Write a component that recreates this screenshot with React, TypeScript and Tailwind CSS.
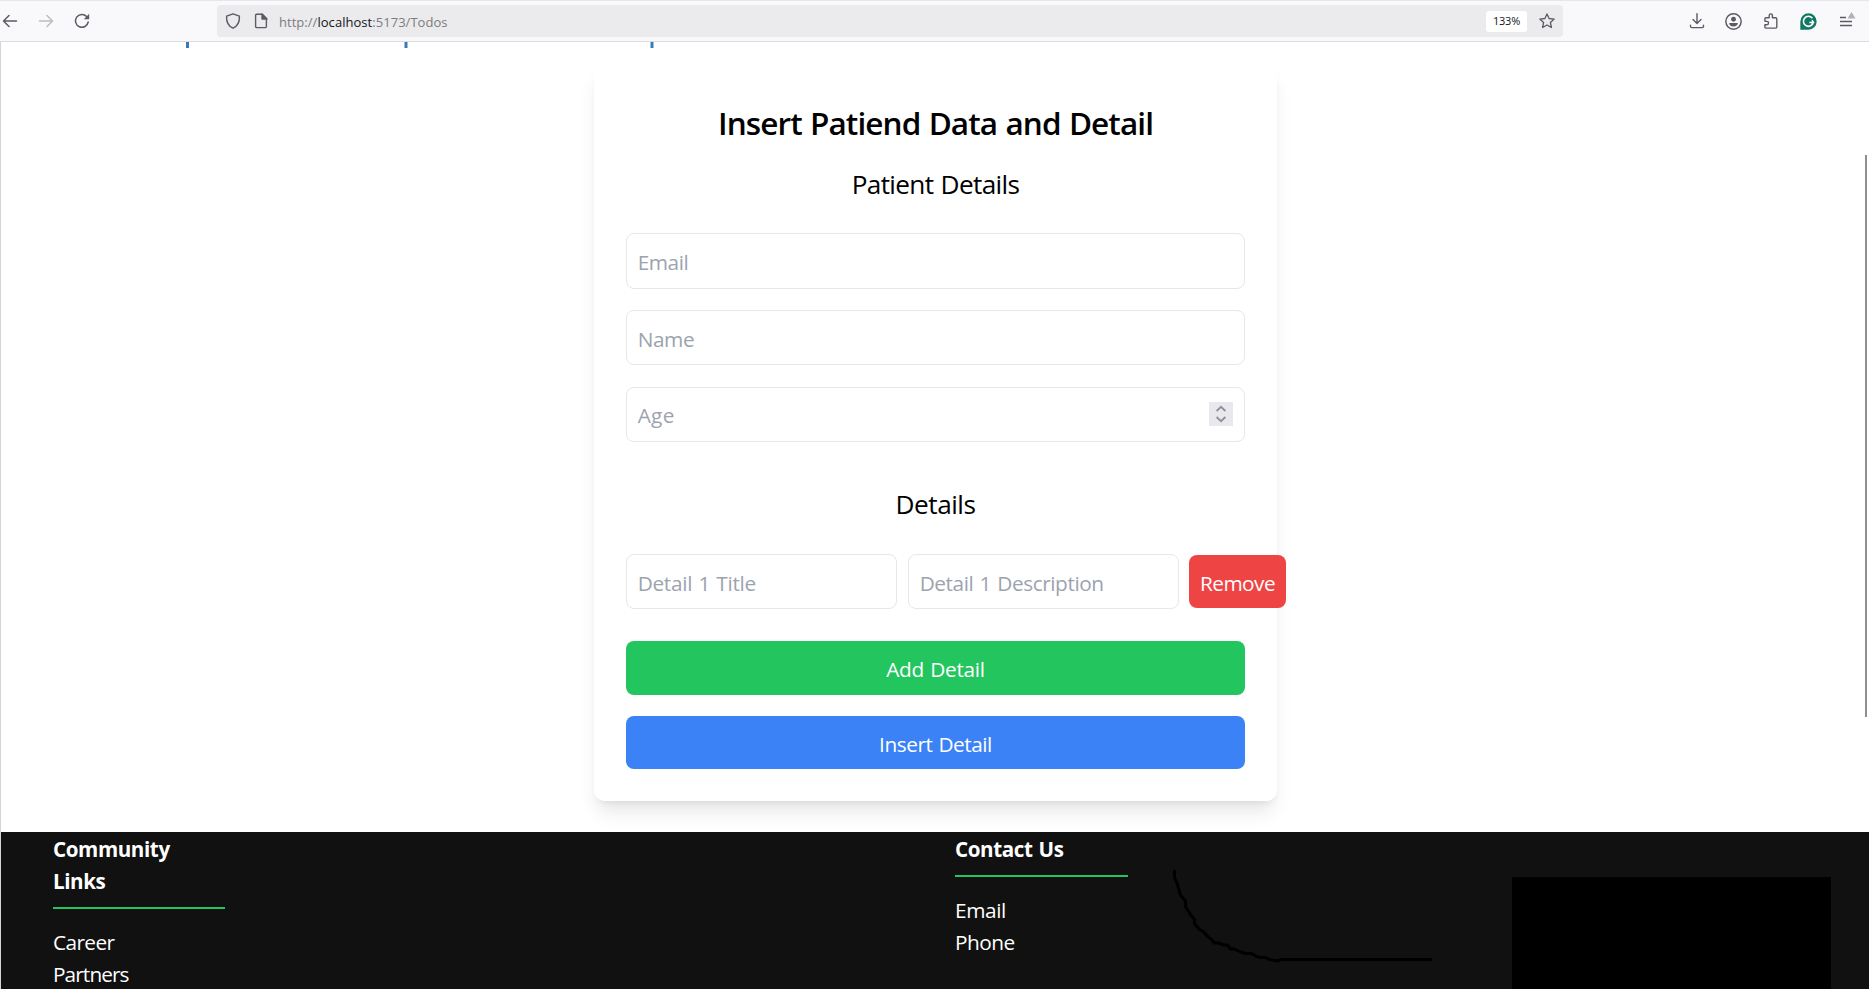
import React from "react";

const body = "font-['Open_Sans','Noto_Sans',sans-serif]";

function Placeholder({ text, className = "", label = "tracking-[-0.3px]", number = false }: { text: string; className?: string; label?: string; number?: boolean }) {
  return (
    <div className={`flex items-center justify-between rounded-[8px] border border-[#e5e7eb] bg-white px-[10.67px] ${className}`}>
      <span className={`pt-[2px] text-[20.8px] leading-8 whitespace-nowrap text-[#9ca3af] ${label}`}>{text}</span>
      {number && (
        <span className="mb-[2px] flex h-6 w-6 items-center justify-center bg-[#e9e9ed]">
          <svg width="24" height="24" viewBox="0 0 24 24" fill="none" stroke="#8f8f9d" strokeWidth="1.9">
            <path d="M7.6 9 12 4.9 16.4 9M7.6 15 12 19.1 16.4 15" />
          </svg>
        </span>
      )}
    </div>
  );
}

function Toolbar() {
  return (
    <header className="flex h-[42px] items-center border-t border-b border-t-[#e6e6ea] border-b-[#dcdcde] bg-[#f9f9fb] text-[#5b5b66]">
      <div className="flex w-[217px] items-center">
        <svg className="ml-[2px]" width="16" height="16" viewBox="0 0 16 16" fill="none" stroke="#5b5b66" strokeWidth="1.5" strokeLinecap="round" strokeLinejoin="round">
          <path d="M14.5 8H1.5M7 2.5 1.5 8 7 13.5" />
        </svg>
        <svg className="ml-[20px]" width="16" height="16" viewBox="0 0 16 16" fill="none" stroke="#bdbdc1" strokeWidth="1.5" strokeLinecap="round" strokeLinejoin="round">
          <path d="M1.5 8h13M9 2.5 14.5 8 9 13.5" />
        </svg>
        <svg className="ml-[20px]" width="16" height="16" viewBox="0 0 16 16" fill="none" stroke="#5b5b66" strokeWidth="1.5" strokeLinecap="round">
          <path d="M14.2 9A6.4 6.4 0 1 1 12.6 3.5" />
          <path d="M15.2 .8v5.4H9.8z" fill="#5b5b66" stroke="none" />
        </svg>
      </div>
      <div className="flex h-8 w-[1346px] items-center rounded-[4px] bg-[#ebebed]">
        <svg className="ml-[8px]" width="16" height="16" viewBox="0 0 16 16" fill="none" stroke="#5b5b66" strokeWidth="1.4" strokeLinejoin="round">
          <path d="M8 .8 14.4 3.2c.3 5.4-1.7 9.8-6.4 12-4.7-2.2-6.7-6.6-6.4-12z" />
        </svg>
        <svg className="ml-[12px]" width="16" height="16" viewBox="0 0 16 16" fill="none" stroke="#5b5b66" strokeWidth="1.4" strokeLinejoin="round">
          <path d="M3.4 1.3h5.8l4.2 4.2v8c0 .7-.4 1.1-1.1 1.1H3.7c-.7 0-1.1-.4-1.1-1.1V2.4c0-.7.3-1.1.8-1.1z" />
          <path d="M9 1v5h5z" fill="#5b5b66" />
        </svg>
        <span className="ml-[10px] pt-[2px] text-[13px] leading-4 tracking-[0.04px] text-[#7c7c80]">
          http://<span className="text-[#15141a]">localhost</span>:5173/Todos
        </span>
        <span className="ml-auto flex h-[21px] w-[41px] items-center justify-center rounded-[3px] bg-white pt-px text-[11px] tracking-[-0.2px] text-[#15141a]">133%</span>
        <svg className="mr-[8px] ml-[12px]" width="16" height="16" viewBox="0 0 16 16" fill="none" stroke="#5b5b66" strokeWidth="1.3" strokeLinejoin="round">
          <path d="m8 .9 2.1 4.6 5.1.6-3.8 3.4 1 5L8 12l-4.4 2.5 1-5L.8 6.1l5.1-.6z" />
        </svg>
      </div>
      <div className="ml-[126px] flex items-center">
        <svg width="16" height="16" viewBox="0 0 16 16" fill="none" stroke="#5b5b66" strokeWidth="1.4" strokeLinecap="round" strokeLinejoin="round">
          <path d="M8 .8v9.5M4 6.5l4 4 4-4M1.5 12.3v1c0 .8.5 1.3 1.3 1.3h10.4c.8 0 1.3-.5 1.3-1.3v-1" />
        </svg>
        <svg className="ml-[20px]" width="17" height="17" viewBox="0 0 16 16" fill="none" stroke="#5b5b66" strokeWidth="1.4">
          <circle cx="8" cy="8" r="7.2" />
          <circle cx="8" cy="5.9" r="2.3" fill="#5b5b66" stroke="none" />
          <path d="M3.9 9.3h8.2c0 2-1.800 3.300-4.100 3.300S3.9 11.3 3.9 9.3z" fill="#5b5b66" stroke="none" />
        </svg>
        <svg className="ml-[21px]" width="16" height="16" viewBox="0 0 16 16" fill="none" stroke="#5b5b66" strokeWidth="1.4" strokeLinejoin="round">
          <path d="M1.9 7.2V6c0-.8.4-1.2 1.2-1.2h3.1V2.5a1.6 1.6 0 0 1 3.2 0v2.3h3.2c.8 0 1.2.4 1.2 1.2v8c0 .7-.4 1.1-1.1 1.1H3c-.7 0-1.1-.4-1.1-1.1v-2.3h2a1.6 1.6 0 0 0 0-3.3c-.8 0-1.3 0-2-.2z" />
        </svg>
        <svg className="ml-[21px]" width="17" height="17" viewBox="0 0 16 16" fill="none">
          <path d="M8 .3a7.7 7.7 0 1 1 0 15.4H.3V8A7.7 7.7 0 0 1 8 .3z" fill="#117865" />
          <path d="M11.6 4.9A4.7 4.7 0 1 0 12.5 8.9H8.8M11.2 6.9l1.5 2-1.5 2" stroke="#fff" strokeWidth="1.5" />
        </svg>
        <svg className="mb-[2px] ml-[22px]" width="17" height="18" viewBox="0 0 17 18" fill="none" stroke="#5b5b66" strokeWidth="1.4">
          <path d="M1 6.5h6M1 10.5h12M1 14.5h12" />
          <path d="M12.5 1 16.5 7.5h-8z" fill="#b1b1b3" stroke="none" />
        </svg>
      </div>
    </header>
  );
}

export default function App() {
  return (
    <div className={`relative flex h-[989px] w-[1869px] flex-col overflow-hidden bg-white text-black ${body}`}>
      <Toolbar />
      <div className="flex min-h-0 flex-1 flex-col border-l border-[#d4d4d8]">
        <div className="flex h-[24px] shrink-0 pl-[185px]">
          <span className="h-[6px] w-[3px] bg-[#377ab7]" />
          <span className="ml-[215px] h-[6px] w-[4px] border-x border-[#9dbfdd] bg-[#377ab7]" />
          <span className="ml-[242px] h-[6px] w-[4px] border-x border-[#9dbfdd] bg-[#377ab7]" />
        </div>
        <main className="ml-[593px] h-[735px] w-[683px] shrink-0 rounded-[10.67px] bg-white px-8 pt-[35px] shadow-[0_13.3px_20px_-4px_rgb(0_0_0/0.1),0_5.3px_8px_-5.3px_rgb(0_0_0/0.1)]">
          <h1 className="h-[43px] text-center text-[31.5px] leading-[43px] font-semibold tracking-[-0.9px] [word-spacing:1px] whitespace-nowrap">Insert Patiend Data and Detail</h1>
          <h2 className="mt-[22px] h-[37px] text-center text-[26.2px] leading-[37px] tracking-[-0.65px] [word-spacing:1px]">Patient Details</h2>
          <div className="mt-[30px] flex flex-col">
            <Placeholder text="Email" className="h-[56px]" label="tracking-[-0.45px]" />
            <Placeholder text="Name" className="mt-[21px] h-[55px]" label="tracking-[-0.4px] mt-px" />
            <Placeholder text="Age" className="mt-[22px] h-[55px]" label="tracking-[0.3px] mb-[2px]" number />
          </div>
          <h2 className="mt-[44px] h-[37px] text-center text-[26.2px] leading-[37px] tracking-[-0.5px]">Details</h2>
          <div className="mt-[31px] flex h-[55px] items-center">
            <Placeholder text="Detail 1 Title" className="h-[55px] w-[271px] shrink-0" label="tracking-[-0.3px] [word-spacing:1.2px] mt-px" />
            <Placeholder text="Detail 1 Description" className="ml-[11px] h-[55px] w-[271px] shrink-0" label="tracking-[-0.42px] [word-spacing:1.2px] mt-px" />
            <button className="ml-[10px] h-[53px] w-[97px] shrink-0 rounded-[8px] bg-[#ef4444] pt-[4px] text-[20.8px] tracking-[-0.55px] text-white">Remove</button>
          </div>
          <button className="mt-[32px] block h-[54px] w-full rounded-[8px] bg-[#22c55e] pt-[3px] text-[20.8px] tracking-[-0.25px] [word-spacing:1px] text-white">Add Detail</button>
          <button className="mt-[21px] block h-[53px] w-full rounded-[8px] bg-[#3b82f6] pt-[4px] text-[20.8px] tracking-[-0.45px] [word-spacing:1px] text-white">Insert Detail</button>
        </main>
        <footer className="relative mt-[31px] flex flex-1 items-start overflow-hidden bg-[#111111] pl-[52px] text-[20.8px] leading-8 tracking-[-0.4px] text-white">
          <section className="w-[172px] pt-[1px]">
            <h3 className="text-[20.6px] leading-8 font-bold">Community<br />Links</h3>
            <hr className="mt-[10px] mb-[17px] border-0 border-t-2 border-[#22c55e]" />
            <p className="tracking-[-0.6px]">Career</p>
            <p className="tracking-[-0.9px]">Partners</p>
          </section>
          <section className="ml-[730px] w-[173px] pt-[1px]">
            <h3 className="text-[20.6px] leading-8 font-bold tracking-[-0.4px] [word-spacing:1px]">Contact Us</h3>
            <hr className="mt-[10px] mb-[17px] border-0 border-t-2 border-[#22c55e]" />
            <p>Email</p>
            <p className="tracking-[-0.5px]">Phone</p>
          </section>
          <svg className="mt-[33px] ml-[40px]" width="280" height="110" viewBox="0 0 280 110" fill="none" stroke="#000" strokeWidth="3" strokeLinecap="round" strokeLinejoin="round">
            <path d="M6.5 6v6.500L9 18l3.500 12 5 6v5.500l5 8 4 5v4l5 6 4 2 3 4 5 4 3 3.500h4l5 2h4l3 4h4l5 2.500 6 2h6l5 3 4 1h5l4 2 8 1.500L113 94.500H263" />
          </svg>
          <div className="mt-[45px] ml-[64px] h-[112px] w-[319px] shrink-0 bg-black" />
        </footer>
      </div>
      <div className="absolute top-[155px] left-[1865px] h-[562px] w-[2px] bg-[#8f8f8f]" />
    </div>
  );
}
